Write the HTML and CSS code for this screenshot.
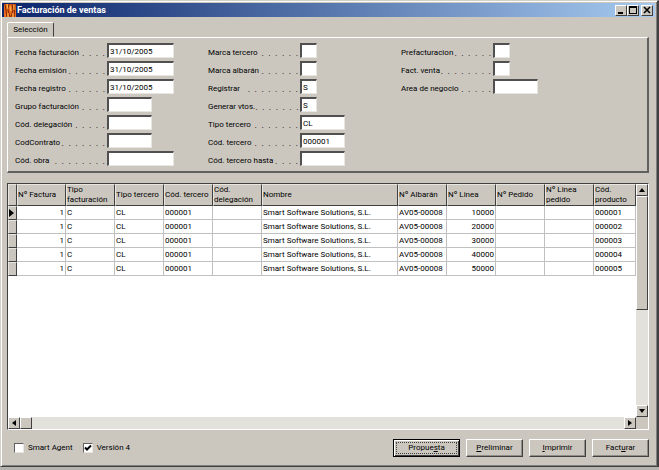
FILE: index.html
```html
<!DOCTYPE html>
<html lang="es">
<head>
    <meta charset="UTF-8">
    <meta name="viewport" content="width=device-width, initial-scale=1.0">
    <title>Facturación de ventas</title>
    <link rel="stylesheet" href="styles.css">
</head>
<body>
    <div class="window">
        <header class="titlebar">
            <svg class="app-icon" width="12" height="13" viewBox="0 0 12 13">
                <rect width="12" height="13" fill="#ee6a1c"/>
                <path d="M1 0l2 13M5 0l-1 6 2 7M8 0l1 6-2 7M11 0l-1 13" stroke="#7a2408" fill="none"/>
                <path d="M3 0l1 5M6 2l1 5M10 1v5M4 9v4M9 9v4" stroke="#ffc04a" fill="none"/>
            </svg>
            <h1>Facturación de ventas</h1>
            <div class="winbtns">
                <button class="winbtn" aria-label="Minimizar"><svg width="8" height="8" viewBox="0 0 8 8"><path d="M1 6h5v2H1z"/></svg></button>
                <button class="winbtn" aria-label="Maximizar"><svg width="8" height="8" viewBox="0 0 8 8"><path d="M0 0h8v8H0zM1 2v5h6V2z" fill-rule="evenodd"/></svg></button>
                <button class="winbtn close" aria-label="Cerrar"><svg width="8" height="8" viewBox="0 0 8 8"><path d="M1 1l6 6M7 1L1 7" stroke="#000" stroke-width="1.6"/></svg></button>
            </div>
        </header>

        <main class="content">
            <div class="tabs"><button class="tab">Selección</button></div>
            <section class="panel">
                <div class="fields">
                    <div class="field"><label for="ffac">Fecha facturación<span>.  .  .  .</span></label><input id="ffac" class="date" value="31/10/2005"></div>
                    <div class="field"><label for="femi">Fecha emisión<span>.  .  .  .  .  .</span></label><input id="femi" class="date" value="31/10/2005"></div>
                    <div class="field"><label for="freg">Fecha registro<span>.  .  .  .  .  .</span></label><input id="freg" class="date" value="31/10/2005"></div>
                    <div class="field"><label for="grupo">Grupo facturación<span>.  .  .  .</span></label><input id="grupo" class="code"></div>
                    <div class="field"><label for="deleg">Cód. delegación<span>.  .  .  .  .</span></label><input id="deleg" class="code"></div>
                    <div class="field"><label for="contr">CodContrato<span>.  .  .  .  .  .  .</span></label><input id="contr" class="code"></div>
                    <div class="field"><label for="obra">Cód. obra<span>.  .  .  .  .  .  .  .</span></label><input id="obra" class="date"></div>
                </div>
                <div class="fields">
                    <div class="field"><label for="mter">Marca tercero<span>.  .  .  .  .  .</span></label><input id="mter" class="flag"></div>
                    <div class="field"><label for="malb">Marca albarán<span>.  .  .  .  .  .</span></label><input id="malb" class="flag"></div>
                    <div class="field"><label for="regi">Registrar<span>.  .  .  .  .  .  .  .</span></label><input id="regi" class="flag" value="S"></div>
                    <div class="field"><label for="vtos">Generar vtos.<span>.  .  .  .  .  .  .</span></label><input id="vtos" class="flag" value="S"></div>
                    <div class="field"><label for="tter">Tipo tercero<span>.  .  .  .  .  .  .</span></label><input id="tter" class="code" value="CL"></div>
                    <div class="field"><label for="cter">Cód. tercero<span>.  .  .  .  .  .  .</span></label><input id="cter" class="code" value="000001"></div>
                    <div class="field"><label for="hasta">Cód. tercero hasta<span>.  .  .  .</span></label><input id="hasta" class="code"></div>
                </div>
                <div class="fields">
                    <div class="field"><label for="pref">Prefacturacion<span>.  .  .  .  .  .</span></label><input id="pref" class="flag"></div>
                    <div class="field"><label for="fven">Fact. venta<span>.  .  .  .  .  .  .  .</span></label><input id="fven" class="flag"></div>
                    <div class="field"><label for="area">Area de negocio<span>.  .  .  .  .</span></label><input id="area" class="code"></div>
                </div>
            </section>

            <section class="grid">
                <div class="sheet">
                    <table>
                        <colgroup>
                            <col class="c-mark"><col class="c-std"><col class="c-std"><col class="c-std"><col class="c-std"><col class="c-std"><col>
                            <col class="c-std"><col class="c-std"><col class="c-std"><col class="c-std"><col class="c-last">
                        </colgroup>
                        <thead>
                            <tr>
                                <th></th><th>Nº Factura</th><th>Tipo<br>facturación</th><th>Tipo tercero</th><th>Cód. tercero</th><th>Cód.<br>delegación</th><th>Nombre</th>
                                <th>Nº Albarán</th><th>Nº Linea</th><th>Nº Pedido</th><th>Nº Linea<br>pedido</th><th>Cód.<br>producto</th>
                            </tr>
                        </thead>
                        <tbody>
                            <tr><th><svg width="5" height="8" viewBox="0 0 5 8"><path d="M0 0l5 4-5 4z"/></svg></th><td class="num">1</td><td>C</td><td>CL</td><td>000001</td><td></td><td>Smart Software Solutions, S.L.</td><td>AV05-00008</td><td class="num">10000</td><td></td><td></td><td>000001</td></tr>
                            <tr><th></th><td class="num">1</td><td>C</td><td>CL</td><td>000001</td><td></td><td>Smart Software Solutions, S.L.</td><td>AV05-00008</td><td class="num">20000</td><td></td><td></td><td>000002</td></tr>
                            <tr><th></th><td class="num">1</td><td>C</td><td>CL</td><td>000001</td><td></td><td>Smart Software Solutions, S.L.</td><td>AV05-00008</td><td class="num">30000</td><td></td><td></td><td>000003</td></tr>
                            <tr><th></th><td class="num">1</td><td>C</td><td>CL</td><td>000001</td><td></td><td>Smart Software Solutions, S.L.</td><td>AV05-00008</td><td class="num">40000</td><td></td><td></td><td>000004</td></tr>
                            <tr><th></th><td class="num">1</td><td>C</td><td>CL</td><td>000001</td><td></td><td>Smart Software Solutions, S.L.</td><td>AV05-00008</td><td class="num">50000</td><td></td><td></td><td>000005</td></tr>
                        </tbody>
                    </table>
                </div>
                <div class="scroll vertical">
                    <button class="arrow" aria-label="Subir"><svg width="6" height="4" viewBox="0 0 6 4"><path d="M3 0l3 4H0z"/></svg></button>
                    <div class="thumb"></div>
                    <button class="arrow last" aria-label="Bajar"><svg width="6" height="4" viewBox="0 0 6 4"><path d="M0 0h6L3 4z"/></svg></button>
                </div>
                <div class="scroll horizontal">
                    <button class="arrow" aria-label="Izquierda"><svg width="4" height="6" viewBox="0 0 4 6"><path d="M4 0v6L0 3z"/></svg></button>
                    <div class="thumb"></div>
                    <button class="arrow last" aria-label="Derecha"><svg width="4" height="6" viewBox="0 0 4 6"><path d="M0 0l4 3-4 3z"/></svg></button>
                </div>
            </section>

            <footer class="actions">
                <label class="check"><input type="checkbox"> Smart Agent</label>
                <label class="check"><input type="checkbox" checked> Versión 4</label>
                <div class="buttons">
                    <button class="btn default"><span>Propue<u>s</u>ta</span></button>
                    <button class="btn"><u>P</u>reliminar</button>
                    <button class="btn"><u>I</u>mprimir</button>
                    <button class="btn">Fact<u>u</u>rar</button>
                </div>
            </footer>
        </main>
    </div>
</body>
</html>
```
FILE: styles.css
```css
*{
    margin: 0;
    padding: 0;
    box-sizing: border-box;
}
body{
    background: #b5b3ad;
    color: #000;
    font-family: Roboto, "Liberation Sans", sans-serif;
    font-size: 8px;
    line-height: 10px;
    padding-bottom: 3px;
}
button, input{
    font: inherit;
    color: inherit;
    border-radius: 0;
}
svg{
    display: block;
}
.window{
    display: flex;
    flex-direction: column;
    min-height: calc(100vh - 3px);
    background: #cbc7bf;
    border: 1px solid #d4d0c8;
    border-right: 2px solid #404040;
    border-bottom-color: #404040;
    box-shadow: inset 1px 1px #fff, inset -1px -1px #808080;
    padding: 2px 2px 2px 1px;
}

/* title bar */
.titlebar{
    display: flex;
    align-items: center;
    height: 14px;
    padding: 0 2px;
    gap: 1px;
    background: linear-gradient(90deg, #0a246a, #a6caf0);
}
.titlebar h1{
    flex: 1;
    color: #fff;
    font-size: 9px;
    line-height: 14px;
}
.winbtns{
    display: flex;
}
.winbtn{
    display: flex;
    align-items: center;
    justify-content: center;
    width: 12px;
    height: 11px;
    background: #cbc7bf;
    border: 1px solid;
    border-color: #fff #404040 #404040 #fff;
}
.close{
    margin-left: 2px;
}

.content{
    flex: 1;
    display: flex;
    flex-direction: column;
    padding: 5px 6px 7px 5px;
}

/* selection panel */
.tabs{
    display: flex;
    height: 15px;
}
.tab{
    width: 47px;
    background: none;
    border: 1px solid;
    border-color: #fff #404040 transparent #fff;
    border-radius: 2px 2px 0 0;
}
.panel{
    display: grid;
    grid-template-columns: 193fr 193fr 246fr;
    border: 1px solid #fff;
    border-right: 2px solid #606060;
    border-bottom: 2px solid #606060;
    padding: 5px 0 2px 7px;
}
.field{
    display: flex;
    height: 18px;
}
.field label{
    display: flex;
    justify-content: space-between;
    width: 92px;
    padding: 5px 2px 0 0;
    white-space: pre;
}
.field label span{
    font-size: 9px;
}
.field input{
    height: 15px;
    padding: 0 1px;
    background: #fff;
    border: 2px solid #505050;
    border-right: 1px solid #e8e6e0;
    border-bottom: 1px solid #e8e6e0;
    outline: 0;
}
.date{
    width: 67px;
}
.code{
    width: 45px;
}
.flag{
    width: 17px;
}

/* invoice grid */
.grid{
    flex: 1;
    display: grid;
    grid-template-columns: 1fr 12px;
    grid-template-rows: 1fr 12px;
    margin-top: 10px;
    border: 1px solid;
    border-color: #404040 #fff #fff #404040;
}
.sheet{
    background: #fff;
    overflow: hidden;
}
table{
    width: 100%;
    table-layout: fixed;
    border-collapse: separate;
    border-spacing: 0;
}
.c-mark{
    width: 9px;
}
.c-std{
    width: 49px;
}
.c-last{
    width: 42px;
}
th{
    background: #cbc7bf;
    border: 1px solid;
    border-color: #e8e6e0 #404040 #404040 #e8e6e0;
    font-weight: normal;
    text-align: left;
    white-space: nowrap;
}
thead th{
    height: 22px;
    line-height: 10px;
}
td{
    height: 14px;
    line-height: 12px;
    border-right: 1px solid #c0c0c0;
    border-bottom: 1px solid #c0c0c0;
    padding: 0 1px;
    white-space: nowrap;
}
.num{
    text-align: right;
}

.scroll{
    display: flex;
    background: #e3e1dc;
}
.vertical{
    flex-direction: column;
}
.arrow, .thumb{
    background: #cbc7bf;
    border: 1px solid;
    border-color: #fff #404040 #404040 #fff;
}
.arrow{
    display: flex;
    align-items: center;
    justify-content: center;
    width: 12px;
    height: 12px;
}
.vertical .thumb{
    height: 49%;
}
.horizontal .thumb{
    width: 12px;
}
.vertical .last{
    margin-top: auto;
}
.horizontal .last{
    margin-left: auto;
}

/* bottom row */
.actions{
    display: flex;
    align-items: center;
    margin-top: 9px;
    padding-left: 7px;
}
.check{
    display: flex;
    align-items: center;
    gap: 4px;
    margin-right: 10px;
}
.check input{
    appearance: none;
    width: 10px;
    height: 10px;
    background: #fff;
    border: 1px solid;
    border-color: #606060 #e8e6e0 #e8e6e0 #606060;
}
.check input:checked{
    background: #fff url("data:image/svg+xml,%3Csvg xmlns='http://www.w3.org/2000/svg' viewBox='0 0 8 8'%3E%3Cpath d='M1 3.5l2 2 4-4' fill='none' stroke='%23000' stroke-width='2'/%3E%3C/svg%3E");
}
.buttons{
    display: flex;
    gap: 6px;
    margin-left: auto;
}
.btn{
    width: 57px;
    height: 18px;
    background: #cbc7bf;
    border: 1px solid;
    border-color: #fff #404040 #404040 #fff;
    box-shadow: inset -1px -1px #908e88;
}
.default{
    width: 67px;
    padding: 1px;
    border-color: #000;
    box-shadow: inset 1px 1px #fff, inset -1px -1px #404040;
}
.default span{
    display: block;
    margin: 0 1px;
    border: 1px dotted #404040;
}
```
